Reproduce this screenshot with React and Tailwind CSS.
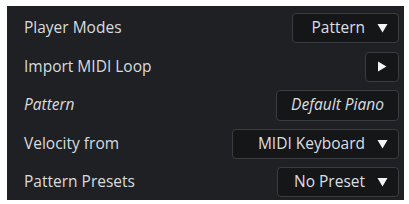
export default function App() {
  const font = { fontFamily: '"Open Sans", "Noto Sans", sans-serif' };
  const Tri = () => (
    <svg width="11" height="10" viewBox="0 0 11 10" className="shrink-0">
      <path d="M0.5 1 L10.5 1 L5.5 9.5 Z" fill="#f4f4f4" />
    </svg>
  );
  const Drop = ({ w, text }) => (
    <div
      className={`flex h-[30px] items-center justify-end gap-[12px] rounded-[4px] border border-[#3b3c40] bg-[#151618] pr-[10px] ${w}`}
    >
      <span className="text-[15.5px] text-[#dcdfe2]">{text}</span>
      <Tri />
    </div>
  );
  const Row = ({ label, italic, children }) => (
    <div className="flex h-[30px] items-center justify-between">
      <span className={`text-[15.5px] text-[#d9dcdf] ${italic ? 'italic' : ''}`}>{label}</span>
      {children}
    </div>
  );
  return (
    <div className="h-[204px] w-[409px] bg-white pl-[7px] pt-[6px]" style={font}>
      <div className="flex h-[194px] w-[397px] flex-col gap-[8.5px] bg-[#1f2023] pl-[17px] pr-[5px] pt-[7px]">
        <Row label="Player Modes">
          <Drop w="w-[107px]" text="Pattern" />
        </Row>
        <Row label="Import MIDI Loop">
          <div className="flex h-[30px] w-[34px] items-center justify-center rounded-[4px] border border-[#3b3c40] bg-[#151618]">
            <svg width="10" height="11" viewBox="0 0 10 11">
              <path d="M1 0.5 L9.5 5.5 L1 10.5 Z" fill="#f4f4f4" />
            </svg>
          </div>
        </Row>
        <Row label="Pattern" italic>
          <div className="flex h-[31px] w-[123px] items-center justify-center rounded-[4px] border border-[#3b3c40] bg-[#151618]">
            <span className="text-[15.5px] italic text-[#dcdfe2]">Default Piano</span>
          </div>
        </Row>
        <Row label="Velocity from">
          <Drop w="w-[167px]" text="MIDI Keyboard" />
        </Row>
        <Row label="Pattern Presets">
          <Drop w="w-[122px]" text="No Preset" />
        </Row>
      </div>
    </div>
  );
}
